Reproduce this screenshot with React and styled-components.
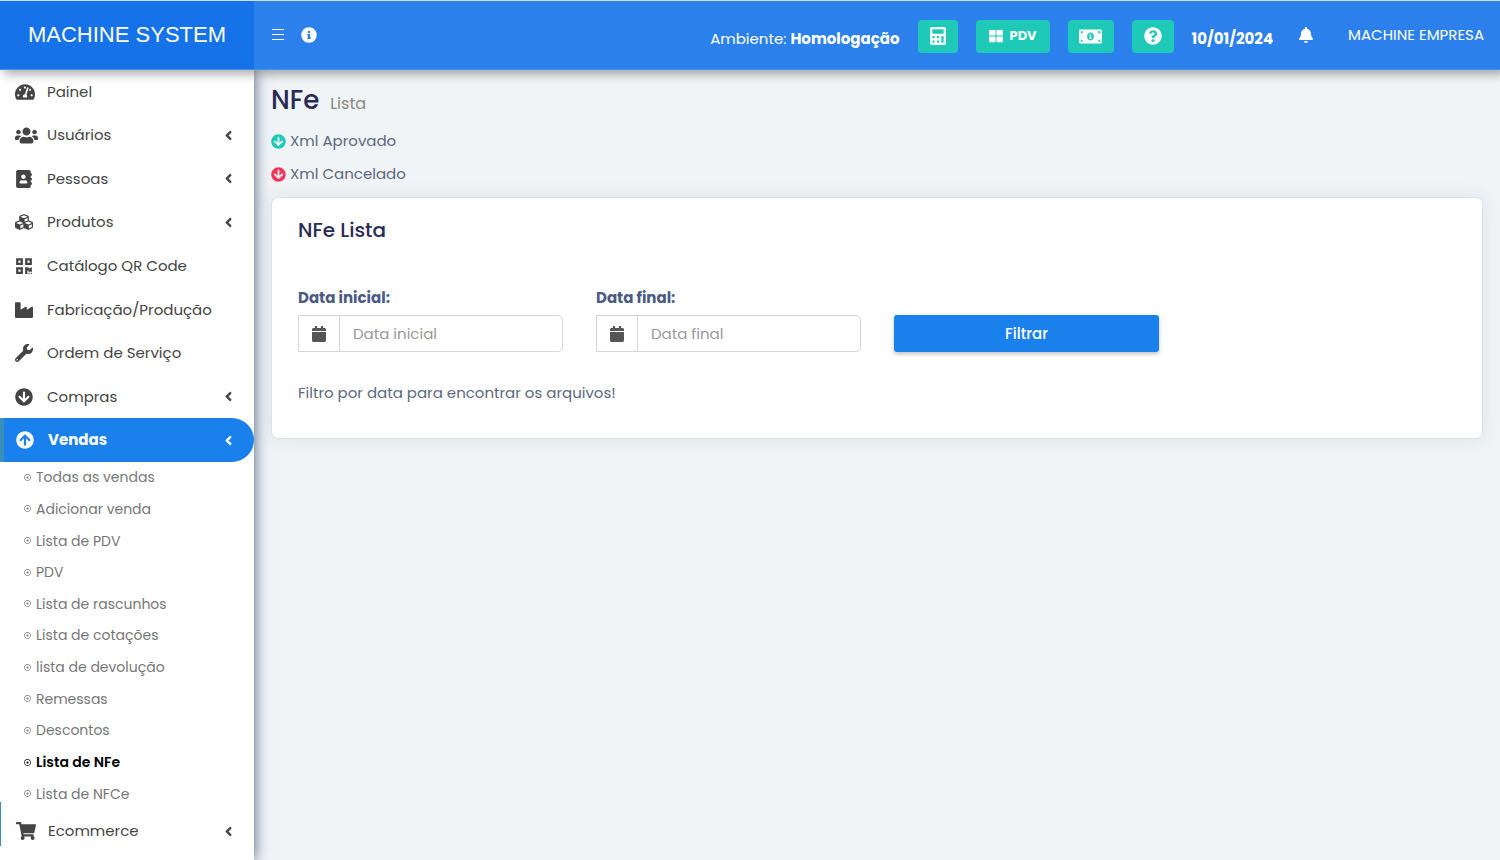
import React from 'react'
import styled, { createGlobalStyle, css } from 'styled-components'
import {
  FaAddressBook,
  FaAngleLeft,
  FaArrowCircleDown,
  FaArrowCircleUp,
  FaBell,
  FaCalculator,
  FaCalendar,
  FaCubes,
  FaIndustry,
  FaInfoCircle,
  FaMoneyBillAlt,
  FaQrcode,
  FaQuestionCircle,
  FaRegDotCircle,
  FaShoppingCart,
  FaTachometerAlt,
  FaThLarge,
  FaUsers,
  FaWrench
} from 'react-icons/fa'

const GlobalStyle = createGlobalStyle`
  * {
    box-sizing: border-box;
  }

  body {
    margin: 0;
    background: #f0f4f7;
    color: #5b6880;
    font-family: Poppins, Inter, sans-serif;
    font-size: 15px;
    line-height: 24px;
  }

  a {
    color: inherit;
    text-decoration: none;
  }

  button,
  input {
    font: inherit;
  }
`

const Page = styled.div`
  display: flex;
  flex-direction: column;
  min-height: 100vh;
`

const Header = styled.header`
  display: flex;
  position: relative;
  z-index: 2;
  height: 70px;
  border-top: 1px solid #d5dbe3;
  border-bottom: 1px solid #4a8fea;
  background: #2b80ec;
  color: #fff;
  box-shadow: 4px 4px 10px rgba(0, 0, 0, 0.35);
`

const Brand = styled.a`
  display: flex;
  align-items: center;
  justify-content: center;
  flex: 0 0 254px;
  background: #1572e8;
  font-family: 'Liberation Sans', Arial, sans-serif;
  font-size: 22px;
`

const Navbar = styled.div`
  display: flex;
  flex: 1;
  align-items: center;
  justify-content: space-between;
  padding: 0 16px 0 17px;
`

const NavGroup = styled.div`
  display: flex;
  align-items: center;
  gap: ${({ $gap }) => $gap}px;
`

const Tools = styled.div`
  display: flex;
  align-items: center;
  gap: 18px;
  padding-top: 2px;
  margin-right: 25px;
`

const HeaderText = styled.span`
  padding-top: 6px;
  font-weight: ${({ $bold }) => ($bold ? 700 : 400)};
  white-space: nowrap;
`

const IconButton = styled.button`
  display: flex;
  padding: 0;
  border: 0;
  background: none;
  color: #fff;
  font-size: 16px;
`

const ToolButton = styled.button`
  display: flex;
  align-items: center;
  justify-content: center;
  gap: 7px;
  width: ${({ $width }) => $width}px;
  height: 33px;
  padding: 0;
  border: 0;
  border-radius: 4px;
  background: #1fc9b7;
  color: #fff;
  font-size: 13px;
  font-weight: 700;
`

const Company = styled.a`
  margin-left: 34px;
  font-size: 15px;
  white-space: nowrap;
`

const Body = styled.div`
  display: flex;
  flex: 1;
`

const Sidebar = styled.nav`
  position: relative;
  z-index: 1;
  flex: 0 0 254px;
  background: #fff;
  color: #444;
  box-shadow: 0 0 14px #465a78;
`

const Menu = styled.ul`
  display: grid;
  grid-auto-rows: 1fr;
  min-height: ${({ $height }) => $height}px;
  margin: 0;
  padding: 0;
  list-style: none;
`

const MenuLink = styled.a`
  display: flex;
  align-items: center;
  height: 100%;
  padding: 0 18px 0 15px;

  ${({ $active }) => $active && css`
    padding-left: 12px;
    border-left: 4px solid #3c8dbc;
    border-radius: 0 22px 22px 0;
    background: #1a80ec;
    color: #fff;
    font-weight: 700;
  `}
`

const LastMenuLink = styled(MenuLink)`
  height: 44px;
  margin-top: -8px;
  padding-top: 14px;
  border-left: 1px solid #3c8dbc;
`

const MenuIcon = styled.span`
  display: flex;
  flex: 0 0 32px;
  font-size: 18px;
`

const MenuLabel = styled.span`
  flex: 1;
  white-space: nowrap;
`

const SubLink = styled.a`
  display: flex;
  align-items: center;
  gap: 5px;
  height: 100%;
  padding: 0 0 1px 24px;
  color: ${({ $active }) => ($active ? '#000' : '#777')};
  font-size: 14px;
  font-weight: ${({ $active }) => ($active ? 600 : 400)};
`

const Content = styled.main`
  flex: 1;
  min-width: 0;
  padding: 12px 17px 20px;
`

const PageTitle = styled.h1`
  display: flex;
  align-items: baseline;
  gap: 11px;
  margin: 0;
  color: #272b55;
  font-size: 26px;
  font-weight: 500;
  line-height: 36px;

  small {
    color: #888;
    font-size: 16px;
    font-weight: 400;
  }
`

const Legends = styled.div`
  display: grid;
  gap: 9px;
  margin-top: 7px;
`

const Legend = styled.p`
  display: flex;
  align-items: center;
  gap: 4px;
  margin: 0;

  svg {
    color: ${({ $color }) => $color};
  }
`

const Card = styled.section`
  margin-top: 11px;
  padding: 20px 25px 33px 26px;
  border: 1px solid #dfe2e5;
  border-radius: 7px;
  background: #fff;
  box-shadow: 0 0 18px rgba(60, 75, 90, 0.1);
`

const CardTitle = styled.h2`
  margin: 0 0 44px;
  color: #272b55;
  font-size: 20px;
  font-weight: 500;
  line-height: 24px;
`

const Filters = styled.form`
  display: grid;
  grid-template-columns: repeat(4, minmax(0, 1fr));
  align-items: end;
  gap: 33px;
`

const FieldLabel = styled.label`
  display: block;
  margin-bottom: 5px;
  color: #4a5a85;
  font-weight: 700;
`

const InputGroup = styled.div`
  display: flex;
  height: 37px;
  border: 1px solid #d2d6de;
  border-radius: 0 5px 5px 0;
`

const Addon = styled.span`
  display: flex;
  align-items: center;
  justify-content: center;
  flex: 0 0 41px;
  border-right: 1px solid #d2d6de;
  color: #555;
  font-size: 16px;
`

const TextInput = styled.input`
  flex: 1;
  min-width: 0;
  padding: 0 13px;
  border: 0;
  background: transparent;
  color: #555;
  outline: none;

  &::placeholder {
    color: #999;
  }
`

const SubmitButton = styled.button`
  height: 37px;
  border: 0;
  border-radius: 3px;
  background: #1a80ec;
  color: #fff;
  font-weight: 500;
  box-shadow: 0 2px 4px rgba(0, 0, 0, 0.25);
`

const Hint = styled.p`
  margin: 29px 0 0;
`

const menu = [
  { label: 'Painel', icon: FaTachometerAlt, size: 20 },
  { label: 'Usuários', icon: FaUsers, size: 23, arrow: true },
  { label: 'Pessoas', icon: FaAddressBook, arrow: true },
  { label: 'Produtos', icon: FaCubes, arrow: true },
  { label: 'Catálogo QR Code', icon: FaQrcode },
  { label: 'Fabricação/Produção', icon: FaIndustry },
  { label: 'Ordem de Serviço', icon: FaWrench },
  { label: 'Compras', icon: FaArrowCircleDown, arrow: true },
  { label: 'Vendas', icon: FaArrowCircleUp, arrow: true, active: true }
]

const salesMenu = [
  'Todas as vendas',
  'Adicionar venda',
  'Lista de PDV',
  'PDV',
  'Lista de rascunhos',
  'Lista de cotações',
  'lista de devolução',
  'Remessas',
  'Descontos',
  'Lista de NFe',
  'Lista de NFCe'
]

const DateField = ({ id, label }) => (
  <div>
    <FieldLabel htmlFor={id}>{label}:</FieldLabel>
    <InputGroup>
      <Addon><FaCalendar /></Addon>
      <TextInput id={id} type='text' placeholder={label} />
    </InputGroup>
  </div>
)

const App = () => {
  return (
    <Page>
      <GlobalStyle />
      <Header>
        <Brand href='#'>MACHINE SYSTEM</Brand>
        <Navbar>
          <NavGroup $gap={16}>
            <IconButton type='button' aria-label='Menu'>
              <svg width='14' height='16' viewBox='0 0 14 16' stroke='#fff' strokeWidth='1'>
                <path d='M1 2.5h12M1 7.5h12M1 12.5h12' />
              </svg>
            </IconButton>
            <IconButton type='button' aria-label='Informações'><FaInfoCircle /></IconButton>
          </NavGroup>
          <NavGroup $gap={0}>
            <Tools>
              <HeaderText>Ambiente: <b>Homologação</b></HeaderText>
              <ToolButton type='button' $width={40} aria-label='Calculadora'><FaCalculator size={18} /></ToolButton>
              <ToolButton type='button' $width={74}><FaThLarge size={14} /> PDV</ToolButton>
              <ToolButton type='button' $width={46} aria-label='Caixa'><FaMoneyBillAlt size={23} /></ToolButton>
              <ToolButton type='button' $width={42} aria-label='Ajuda'><FaQuestionCircle size={18} /></ToolButton>
              <HeaderText $bold>10/01/2024</HeaderText>
            </Tools>
            <IconButton type='button' aria-label='Notificações'><FaBell /></IconButton>
            <Company href='#'>MACHINE EMPRESA</Company>
          </NavGroup>
        </Navbar>
      </Header>
      <Body>
        <Sidebar>
          <Menu $height={392}>
            {menu.map(({ label, icon: Icon, size = 18, arrow, active }) => (
              <li key={label}>
                <MenuLink href='#' $active={active}>
                  <MenuIcon><Icon size={size} /></MenuIcon>
                  <MenuLabel>{label}</MenuLabel>
                  {arrow && <FaAngleLeft />}
                </MenuLink>
              </li>
            ))}
          </Menu>
          <Menu $height={348}>
            {salesMenu.map((label) => (
              <li key={label}>
                <SubLink href='#' $active={label === 'Lista de NFe'}>
                  <FaRegDotCircle size={7} />
                  {label}
                </SubLink>
              </li>
            ))}
          </Menu>
          <LastMenuLink href='#'>
            <MenuIcon><FaShoppingCart size={20} /></MenuIcon>
            <MenuLabel>Ecommerce</MenuLabel>
            <FaAngleLeft />
          </LastMenuLink>
        </Sidebar>
        <Content>
          <PageTitle>NFe <small>Lista</small></PageTitle>
          <Legends>
            <Legend $color='#1fc9b7'><FaArrowCircleDown /> Xml Aprovado</Legend>
            <Legend $color='#f5365c'><FaArrowCircleDown /> Xml Cancelado</Legend>
          </Legends>
          <Card>
            <CardTitle>NFe Lista</CardTitle>
            <Filters onSubmit={(e) => e.preventDefault()}>
              <DateField id='start_date' label='Data inicial' />
              <DateField id='end_date' label='Data final' />
              <SubmitButton type='submit'>Filtrar</SubmitButton>
            </Filters>
            <Hint>Filtro por data para encontrar os arquivos!</Hint>
          </Card>
        </Content>
      </Body>
    </Page>
  )
}

export default App
